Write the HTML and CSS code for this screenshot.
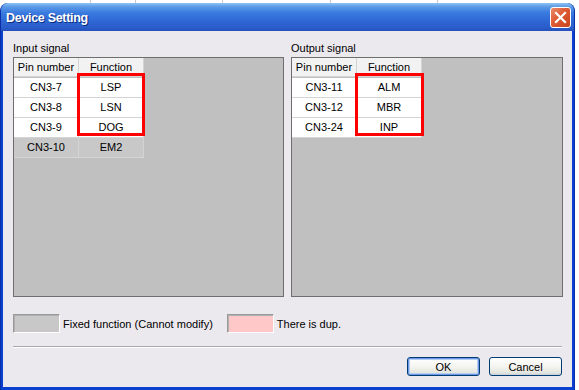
FILE: index.html
```html
<!DOCTYPE html>
<html lang="en">
<head>
<meta charset="utf-8"/>
<title>Device Setting</title>
<link rel="stylesheet" href="styles.css">
</head>
<body>
<div class="window">
  <div class="titlebar">
    <span class="title">Device Setting</span>
    <span class="close-btn">
      <svg width="13" height="13" viewBox="0 0 13 13"><path d="M2 2 L11 11 M11 2 L2 11" stroke="#fff" stroke-width="2.2" stroke-linecap="square"/></svg>
    </span>
  </div>
  <div class="dialog">
    <div class="groups">
      <div class="group">
        <div class="group-label">Input signal</div>
        <div class="panel">
          <div class="grid">
            <div class="cell head">Pin number</div><div class="cell head">Function</div>
            <div class="cell">CN3-7</div><div class="cell">LSP</div>
            <div class="cell">CN3-8</div><div class="cell">LSN</div>
            <div class="cell">CN3-9</div><div class="cell">DOG</div>
            <div class="cell fixed">CN3-10</div><div class="cell fixed">EM2</div>
          </div>
          <div class="highlight"></div>
        </div>
      </div>
      <div class="group group-right">
        <div class="group-label">Output signal</div>
        <div class="panel">
          <div class="grid">
            <div class="cell head">Pin number</div><div class="cell head">Function</div>
            <div class="cell">CN3-11</div><div class="cell">ALM</div>
            <div class="cell">CN3-12</div><div class="cell">MBR</div>
            <div class="cell">CN3-24</div><div class="cell">INP</div>
          </div>
          <div class="highlight"></div>
        </div>
      </div>
    </div>
    <div class="legend">
      <span class="swatch swatch-fixed"></span>
      <span class="legend-text">Fixed function (Cannot modify)</span>
      <span class="swatch swatch-dup"></span>
      <span class="legend-text">There is dup.</span>
    </div>
    <div class="separator"></div>
    <div class="buttons">
      <button class="btn btn-default">OK</button>
      <button class="btn">Cancel</button>
    </div>
  </div>
</div>
</body>
</html>
```

FILE: styles.css
```css
body {
  margin: 0;
  padding: 0;
  background-color: #fff;
  background-image:
    linear-gradient(#c8c8c8, #c8c8c8),
    linear-gradient(#c8c8c8, #c8c8c8),
    linear-gradient(#c8c8c8, #c8c8c8),
    linear-gradient(#c8c8c8, #c8c8c8),
    linear-gradient(#c8c8c8, #c8c8c8);
  background-size: 1px 4px;
  background-repeat: no-repeat;
  background-position: 90px 0, 135px 0, 222px 0, 330px 0, 437px 0;
  font-family: "Liberation Sans", Arial, sans-serif;
  font-size: 11px;
  color: #000;
  width: 579px;
  height: 390px;
  overflow: hidden;
}
.window {
  margin-top: 3px;
  width: 575px;
  height: 387px;
  box-sizing: border-box;
  display: flex;
  flex-direction: column;
  border-radius: 8px 8px 0 0;
  background: #0b3fd0;
  border-left: 1px solid #0a2fa8;
  border-right: 1px solid #0a2fa8;
  overflow: hidden;
}
.titlebar {
  height: 28px;
  flex: none;
  display: flex;
  align-items: center;
  justify-content: space-between;
  padding: 0 3px 0 5px;
  background: linear-gradient(#8ec3f2 0%, #5a9ae6 14%, #3a7ae0 35%, #2c64d2 70%, #2a5cc8 90%, #2450bc 100%);
}
.title {
  color: #fff;
  font-family: "Liberation Sans", Arial, sans-serif;
  font-weight: bold;
  font-size: 12.5px;
  letter-spacing: -0.3px;
  text-shadow: 1px 1px 0 #0a2a80;
  padding-top: 1px;
}
.close-btn {
  width: 19px;
  height: 19px;
  border: 1px solid #fff;
  border-radius: 3px;
  background: linear-gradient(135deg, #ea8a6a 0%, #de5a34 45%, #c8441e 100%);
  display: flex;
  align-items: center;
  justify-content: center;
  margin-top: 1px;
}
.dialog {
  flex: 1;
  margin: 0 2px 3px 2px;
  background: #ece9ee;
  padding: 11px 9px 0 10px;
  display: flex;
  flex-direction: column;
}
.groups {
  display: flex;
  gap: 7px;
}
.group {
  width: 271px;
}
.group-right {
  width: 272px;
}
.group-label {
  line-height: 13px;
  height: 13px;
  margin-bottom: 2px;
}
.panel {
  position: relative;
  height: 240px;
  box-sizing: border-box;
  border: 1px solid #6e6e6e;
  background: #c0c0c0;
}
.grid {
  display: grid;
  grid-template-columns: 65px 65px;
  grid-auto-rows: 20px;
  width: 130px;
}
.cell {
  box-sizing: border-box;
  border-right: 1px solid #d4d4d4;
  border-bottom: 1px solid #d4d4d4;
  background: #fff;
  text-align: center;
  line-height: 18px;
}
.cell.head {
  background: #f2f2f2;
  height: 19px;
  line-height: 18px;
}
.cell.fixed {
  background: #c8c8c8;
}
.highlight {
  position: absolute;
  left: 63px;
  top: 15px;
  width: 68px;
  height: 63px;
  box-sizing: border-box;
  border: 3px solid #ff0000;
}
.group-right .highlight {
  left: 63px;
  width: 69px;
}
.legend {
  display: flex;
  align-items: center;
  margin-top: 17px;
  height: 19px;
}
.swatch {
  width: 47px;
  height: 19px;
  box-sizing: border-box;
  border: 1px solid;
  border-color: #9a9a9a #fff #fff #9a9a9a;
  box-shadow: inset 1px 1px 0 #b0b0b0;
}
.swatch-fixed {
  background: #c8c8c8;
}
.swatch-dup {
  background: #ffc8c8;
  margin-left: 14px;
}
.legend-text {
  margin-left: 3px;
}
.separator {
  margin-top: 13px;
  height: 1px;
  width: 549px;
  background: #a8a8a8;
  border-bottom: 1px solid #fff;
}
.buttons {
  margin-top: 9px;
  display: flex;
  justify-content: flex-end;
  gap: 9px;
  padding-right: 1px;
}
.btn {
  width: 73px;
  height: 19px;
  padding: 0;
  font-family: "Liberation Sans", Arial, sans-serif;
  font-size: 11px;
  color: #000;
  border: 1px solid #003c74;
  border-radius: 3px;
  background: linear-gradient(#ffffff 0%, #f4f4f0 50%, #e6e6e0 85%, #c8cdd8 100%);
}
.btn-default {
  box-shadow: inset 0 0 0 1px #6d98e4, inset 0 0 0 2px #b4ccf4;
}
```
